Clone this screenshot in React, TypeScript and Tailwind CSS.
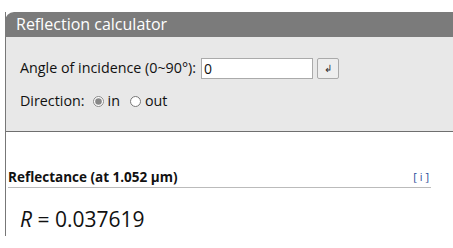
import React from "react";

export default function App() {
  const [angle, setAngle] = React.useState("0");
  const [dir, setDir] = React.useState("in");

  return (
    <div className="w-[453px] h-[248px] overflow-hidden bg-white pt-[12px] pl-[5px] font-['Open_Sans',sans-serif] text-[#111]">
      <div className="w-[460px] border-l border-[#777]">
        <div className="h-[25px] bg-[#7b7b7b] rounded-tl-[9px] -ml-px pl-[11px] text-white text-[16px] leading-[25px]">
          Reflection calculator
        </div>
        <div className="h-[95px] bg-[#e8e8e8] border-b border-[#6f6f6f] pl-[14px] pt-[20px] text-[14.3px]">
          <div className="flex items-center h-[22px]">
            <span>Angle of incidence (0~90°):</span>
            <input
              value={angle}
              onChange={(e) => setAngle(e.target.value)}
              className="ml-[5px] w-[112px] h-[21px] bg-white border border-[#aaa] px-[2px] text-[14px] outline-none"
            />
            <button className="ml-[4px] w-[22px] h-[21px] rounded-[2px] border border-[#aaa] bg-[#eee] flex items-center justify-center text-[10px] text-[#333]">
              ↲
            </button>
          </div>
          <div className="flex items-center h-[22px] mt-[11px]">
            <span>Direction:</span>
            <label className="flex items-center ml-[8px]">
              <input type="radio" checked={dir === "in"} onChange={() => setDir("in")} className="w-[11px] h-[11px] m-0 accent-[#888]" />
              <span className="ml-[4px]">in</span>
            </label>
            <label className="flex items-center ml-[10px]">
              <input type="radio" checked={dir === "out"} onChange={() => setDir("out")} className="w-[11px] h-[11px] m-0 accent-[#888]" />
              <span className="ml-[4px]">out</span>
            </label>
          </div>
        </div>
        <div className="pl-[2px] pt-[36px] w-[425px]">
          <div className="flex justify-between items-end border-b border-[#bbb] pb-[1px] text-[13.5px] leading-[18px]">
            <span className="font-bold">Reflectance (at 1.052 µm)</span>
            <span className="text-[#2b4c9a] text-[11px] pr-[2px]">[ i ]</span>
          </div>
          <div className="pl-[12px] pt-[16px] text-[21px]">
            <span className="italic">R</span> = 0.037619
          </div>
        </div>
      </div>
    </div>
  );
}
